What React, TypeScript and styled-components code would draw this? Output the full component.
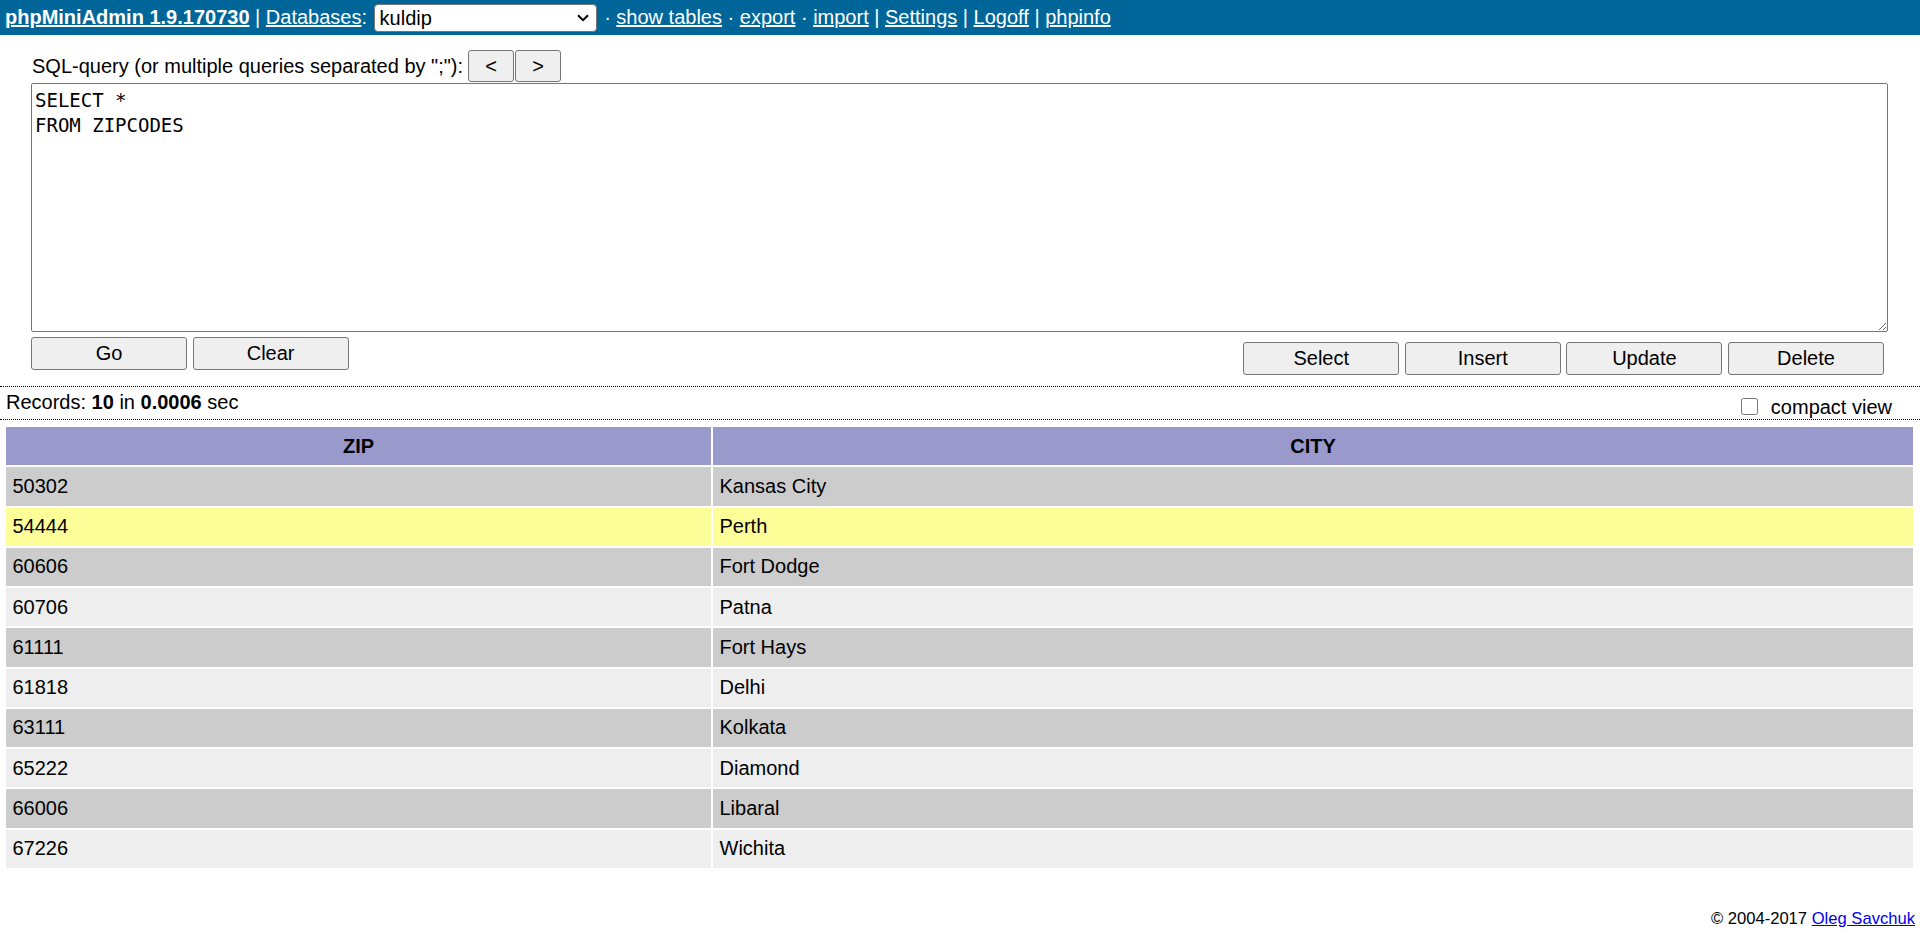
import React from 'react';
import styled, { createGlobalStyle } from 'styled-components';

const GlobalStyle = createGlobalStyle`
  html, body {
    margin: 0;
    padding: 0;
    background: #fff;
  }
  body {
    font-family: 'Liberation Sans', Arial, sans-serif;
    font-size: 20px;
    color: #000;
  }
`;

const TopBar = styled.div`
  display: flex;
  align-items: center;
  height: 35px;
  padding: 0 5px;
  background: #069;
  color: #fff;
  white-space: pre;
`;

const TopLink = styled.a<{ bold?: boolean }>`
  color: #fff;
  text-decoration: underline;
  font-weight: ${props => (props.bold ? 'bold' : 'normal')};
  cursor: pointer;
`;

const Sep = styled.span`
  color: #fff;
`;

const SelectWrap = styled.span`
  position: relative;
  display: inline-flex;
  margin: 0 2px 0 1px;
`;

const DbSelect = styled.select`
  appearance: none;
  width: 223px;
  height: 28px;
  padding: 0 30px 0 5px;
  font-family: 'Liberation Sans', Arial, sans-serif;
  font-size: 20px;
  color: #000;
  background: #fff;
  border: 1px solid #767676;
  border-radius: 4px;
  outline: none;
`;

const Chevron = styled.svg`
  position: absolute;
  top: 10px;
  right: 8px;
  pointer-events: none;
`;

const QueryForm = styled.div`
  padding: 15px 32px 11px 31px;
`;

const LabelRow = styled.div`
  display: flex;
  align-items: center;
  gap: 1px;
  height: 32px;
`;

const Label = styled.span`
  margin-left: 1px;
  margin-right: 4px;
  line-height: 23px;
`;

const NavButton = styled.button`
  width: 46px;
  height: 32px;
  padding: 0;
  font-family: 'Liberation Sans', Arial, sans-serif;
  font-size: 20px;
  color: #000;
  background: #efefef;
  border: 1px solid #767676;
  border-radius: 3px;
`;

const QueryArea = styled.textarea`
  display: block;
  box-sizing: border-box;
  width: 1857px;
  height: 249px;
  margin-top: 1px;
  padding: 4px 3px;
  font-family: 'DejaVu Sans Mono', 'Liberation Mono', monospace;
  font-size: 19px;
  line-height: 25px;
  color: #000;
  border: 1px solid #767676;
  border-radius: 2px;
  resize: both;
  outline: none;
`;

const ActionRow = styled.div`
  display: flex;
  justify-content: space-between;
  align-items: flex-start;
  margin-top: 5px;
`;

const ButtonGroup = styled.div<{ offset?: number; trail?: number }>`
  display: flex;
  gap: 5.6px;
  margin-top: ${props => props.offset ?? 0}px;
  margin-right: ${props => props.trail ?? 0}px;
`;

const ActionButton = styled.button`
  width: 156px;
  height: 33px;
  padding: 0;
  font-family: 'Liberation Sans', Arial, sans-serif;
  font-size: 20px;
  color: #000;
  background: #efefef;
  border: 1px solid #767676;
  border-radius: 3px;
`;

const ResultBar = styled.div`
  display: flex;
  justify-content: space-between;
  align-items: flex-start;
  height: 32px;
  border-top: 1px dotted #000;
  border-bottom: 1px dotted #000;
`;

const RecordsInfo = styled.div`
  padding: 4px 0 0 6px;
  line-height: 23px;
`;

const CompactToggle = styled.label`
  display: flex;
  align-items: center;
  padding: 9px 28px 0 0;
  line-height: 23px;
`;

const Check = styled.input`
  width: 17px;
  height: 17px;
  margin: 0 13px 2px 0;
`;

const ResultTable = styled.table`
  width: calc(100% - 9px);
  margin: 5px 5px 0 4px;
  border-spacing: 2px;
  table-layout: fixed;
`;

const HeadCell = styled.th<{ w?: number }>`
  box-sizing: border-box;
  width: ${props => (props.w ? `${props.w}px` : 'auto')};
  height: 38.25px;
  padding: 0 6.5px;
  background: #99c;
  font-weight: bold;
  text-align: center;
`;

const Row = styled.tr<{ hot?: boolean }>`
  background: #ccc;
  &:nth-child(even) {
    background: #eee;
  }
  ${props => props.hot && `
    &&, &&:nth-child(even) { background: #ff9; }
  `}
`;

const Cell = styled.td`
  height: 38.25px;
  padding: 0 6.5px;
  text-align: left;
`;

const Footer = styled.div`
  margin-top: 39px;
  padding-right: 5px;
  text-align: right;
  font-size: 16.6px;
`;

const FooterLink = styled.a`
  color: #00e;
  text-decoration: underline;
`;

const rows = [
  { zip: '50302', city: 'Kansas City' },
  { zip: '54444', city: 'Perth', hot: true },
  { zip: '60606', city: 'Fort Dodge' },
  { zip: '60706', city: 'Patna' },
  { zip: '61111', city: 'Fort Hays' },
  { zip: '61818', city: 'Delhi' },
  { zip: '63111', city: 'Kolkata' },
  { zip: '65222', city: 'Diamond' },
  { zip: '66006', city: 'Libaral' },
  { zip: '67226', city: 'Wichita' },
];

const App: React.FC = () => {
  return (
    <>
      <GlobalStyle />
      <TopBar>
        <TopLink bold>phpMiniAdmin 1.9.170730</TopLink>
        <Sep> | </Sep>
        <TopLink>Databases</TopLink>
        <Sep>: </Sep>
        <SelectWrap>
          <DbSelect defaultValue="kuldip">
            <option value="kuldip">kuldip</option>
          </DbSelect>
          <Chevron width="12" height="8" viewBox="0 0 12 8">
            <path d="M1 1.2 L6 6.2 L11 1.2" fill="none" stroke="#000" strokeWidth="2" />
          </Chevron>
        </SelectWrap>
        <Sep> · </Sep>
        <TopLink>show tables</TopLink>
        <Sep> · </Sep>
        <TopLink>export</TopLink>
        <Sep> · </Sep>
        <TopLink>import</TopLink>
        <Sep> | </Sep>
        <TopLink>Settings</TopLink>
        <Sep> | </Sep>
        <TopLink>Logoff</TopLink>
        <Sep> | </Sep>
        <TopLink>phpinfo</TopLink>
      </TopBar>

      <QueryForm>
        <LabelRow>
          <Label>SQL-query (or multiple queries separated by ";"):</Label>
          <NavButton>&lt;</NavButton>
          <NavButton>&gt;</NavButton>
        </LabelRow>
        <QueryArea defaultValue={'SELECT *\nFROM ZIPCODES'} spellCheck={false} />
        <ActionRow>
          <ButtonGroup>
            <ActionButton>Go</ActionButton>
            <ActionButton>Clear</ActionButton>
          </ButtonGroup>
          <ButtonGroup offset={5} trail={4}>
            <ActionButton>Select</ActionButton>
            <ActionButton>Insert</ActionButton>
            <ActionButton>Update</ActionButton>
            <ActionButton>Delete</ActionButton>
          </ButtonGroup>
        </ActionRow>
      </QueryForm>

      <ResultBar>
        <RecordsInfo>
          Records: <b>10</b> in <b>0.0006</b> sec
        </RecordsInfo>
        <CompactToggle>
          <Check type="checkbox" />
          compact view
        </CompactToggle>
      </ResultBar>

      <ResultTable>
        <thead>
          <tr>
            <HeadCell w={705}>ZIP</HeadCell>
            <HeadCell>CITY</HeadCell>
          </tr>
        </thead>
        <tbody>
          {rows.map(r => (
            <Row key={r.zip} hot={r.hot}>
              <Cell>{r.zip}</Cell>
              <Cell>{r.city}</Cell>
            </Row>
          ))}
        </tbody>
      </ResultTable>

      <Footer>
        © 2004-2017 <FooterLink>Oleg Savchuk</FooterLink>
      </Footer>
    </>
  );
};

export default App;
